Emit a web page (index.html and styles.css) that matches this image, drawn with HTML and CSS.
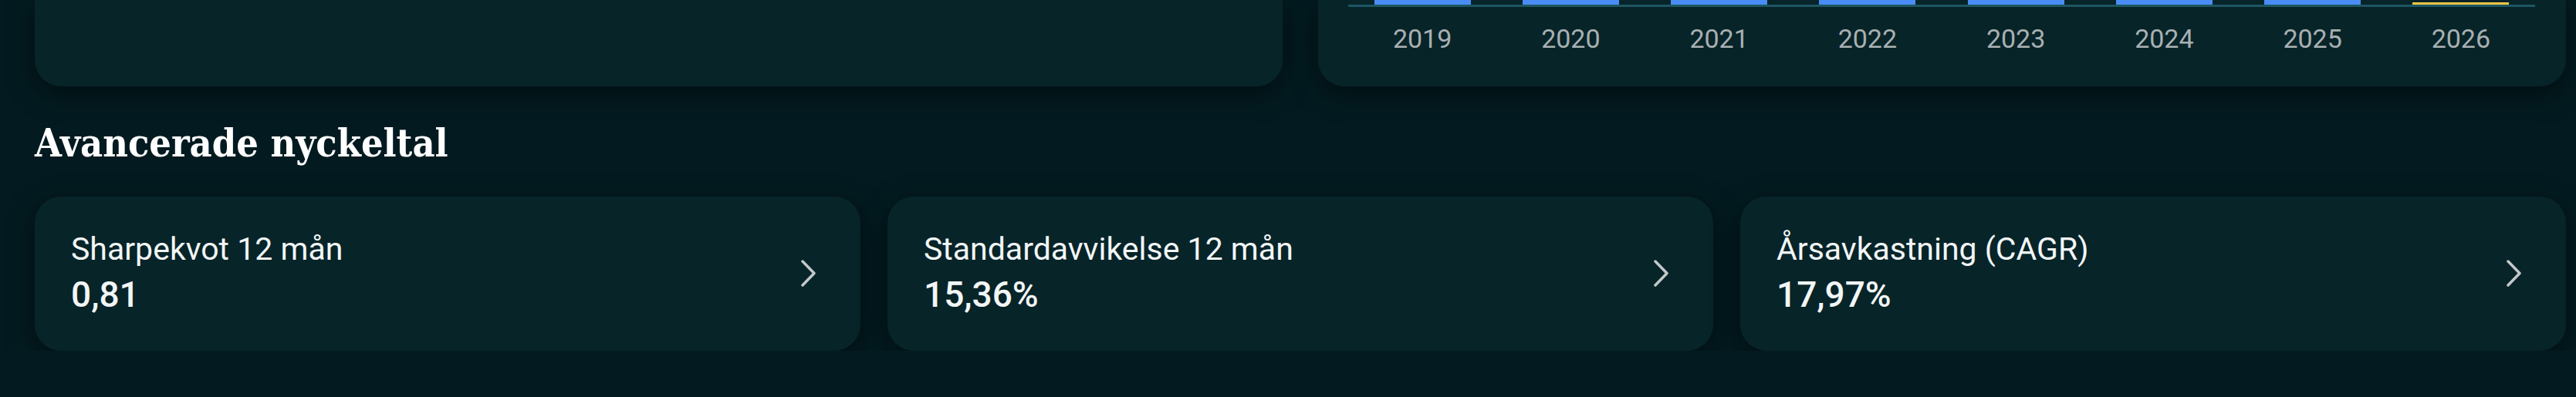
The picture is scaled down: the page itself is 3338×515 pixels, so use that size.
FILE: index.html
```html
<!DOCTYPE html>
<html lang="sv">
<head>
<meta charset="utf-8">
<title>Avancerade nyckeltal</title>
<link rel="stylesheet" href="styles.css">
</head>
<body>
<div class="page">
  <div class="top-row">
    <div class="card top-card"></div>
    <div class="card top-card chart-card">
      <div class="bars">
        <div class="bar"></div>
        <div class="bar"></div>
        <div class="bar"></div>
        <div class="bar"></div>
        <div class="bar"></div>
        <div class="bar"></div>
        <div class="bar"></div>
        <div class="bar current"></div>
      </div>
      <div class="years">
        <span>2019</span>
        <span>2020</span>
        <span>2021</span>
        <span>2022</span>
        <span>2023</span>
        <span>2024</span>
        <span>2025</span>
        <span>2026</span>
      </div>
    </div>
  </div>

  <h2 class="section-title">Avancerade nyckeltal</h2>

  <div class="metrics">
    <a class="card metric" href="#">
      <div class="metric-text">
        <div class="metric-label">Sharpekvot 12 mån</div>
        <div class="metric-value">0,81</div>
      </div>
      <svg class="chevron" width="19" height="35" viewBox="0 0 19 35"><polyline points="2,2 17,17.5 2,33"/></svg>
    </a>
    <a class="card metric" href="#">
      <div class="metric-text">
        <div class="metric-label">Standardavvikelse 12 mån</div>
        <div class="metric-value">15,36%</div>
      </div>
      <svg class="chevron" width="19" height="35" viewBox="0 0 19 35"><polyline points="2,2 17,17.5 2,33"/></svg>
    </a>
    <a class="card metric" href="#">
      <div class="metric-text">
        <div class="metric-label">Årsavkastning (CAGR)</div>
        <div class="metric-value">17,97%</div>
      </div>
      <svg class="chevron" width="19" height="35" viewBox="0 0 19 35"><polyline points="2,2 17,17.5 2,33"/></svg>
    </a>
  </div>
</div>
</body>
</html>
```

FILE: styles.css
```css
* {
  box-sizing: border-box;
}

html, body {
  margin: 0;
  padding: 0;
  background: #031b20;
}

body {
  font-family: Roboto, "Liberation Sans", sans-serif;
  color: #f2f6f6;
}

.page {
  padding: 0 13px 0 45px;
  width: 3338px;
}

.card {
  background: #072429;
  border-radius: 34px;
  box-shadow: 0 10px 34px rgba(0, 6, 8, 0.55);
}

.top-row {
  display: grid;
  grid-template-columns: 1fr 1fr;
  gap: 46px;
}

.top-card {
  height: 112px;
  border-radius: 0 0 34px 34px;
}

.chart-card {
  padding: 0 40px 0 39px;
}

.bars {
  display: grid;
  grid-template-columns: repeat(8, 1fr);
  align-items: end;
  height: 9px;
  border-bottom: 3px solid #1d5661;
}

.bar {
  justify-self: center;
  width: 65%;
  height: 6px;
  background: #4a8cf6;
}

.bar.current {
  height: 3px;
  background: #f3c544;
}

.years {
  display: grid;
  grid-template-columns: repeat(8, 1fr);
  padding-top: 21px;
  font-size: 34px;
  line-height: normal;
  color: #a9b0b2;
  text-align: center;
}

.section-title {
  margin: 45px 0 40px;
  font-family: "DejaVu Serif", "Liberation Serif", serif;
  font-stretch: condensed;
  font-weight: 700;
  font-size: 50px;
  line-height: 58px;
  color: #ffffff;
}

.metrics {
  display: grid;
  grid-template-columns: repeat(3, 1fr);
  gap: 35px;
}

.metric {
  display: flex;
  align-items: center;
  justify-content: space-between;
  padding: 44px 58px 46px 47px;
  text-decoration: none;
  color: inherit;
}

.metric-label {
  font-size: 41px;
  line-height: normal;
  font-weight: 400;
}

.metric-value {
  margin-top: 8px;
  font-size: 46px;
  line-height: normal;
  font-weight: 500;
}

.chevron {
  display: block;
  flex: none;
}

.chevron polyline {
  fill: none;
  stroke: #c4c8c9;
  stroke-width: 3.5;
  stroke-linecap: round;
  stroke-linejoin: round;
}
```
